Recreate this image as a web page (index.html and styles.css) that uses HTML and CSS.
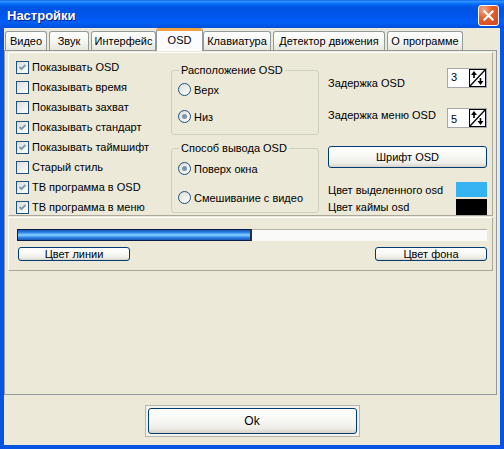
FILE: index.html
```html
<!DOCTYPE html>
<html lang="ru">
<head>
<meta charset="utf-8">
<title>Настройки</title>
<link rel="stylesheet" href="styles.css">
</head>
<body>
<div class="window">
  <div class="titlebar">
    <span class="title">Настройки</span>
    <span class="close"><svg width="13" height="13" viewBox="0 0 13 13"><path d="M2.5 2.5 L10.5 10.5 M10.5 2.5 L2.5 10.5" stroke="#fff" stroke-width="2.2" stroke-linecap="square"/></svg></span>
  </div>
  <div class="client">
    <div class="tabs">
      <div class="tab w-video">Видео</div>
      <div class="tab w-sound">Звук</div>
      <div class="tab w-iface">Интерфейс</div>
      <div class="tab sel w-osd">OSD</div>
      <div class="tab w-keys">Клавиатура</div>
      <div class="tab w-motion">Детектор движения</div>
      <div class="tab w-about">О программе</div>
    </div>
    <div class="pane">
      <div class="panel top">
        <div class="checks">
          <div class="check"><span class="box"><svg viewBox="0 0 11 11" width="11" height="11"><polyline points="2.5,5 4.5,7 8.5,3" fill="none" stroke="#8095AE" stroke-width="1.8"/></svg></span>Показывать OSD</div>
          <div class="check"><span class="box"></span>Показывать время</div>
          <div class="check"><span class="box"></span>Показывать захват</div>
          <div class="check"><span class="box"><svg viewBox="0 0 11 11" width="11" height="11"><polyline points="2.5,5 4.5,7 8.5,3" fill="none" stroke="#8095AE" stroke-width="1.8"/></svg></span>Показывать стандарт</div>
          <div class="check"><span class="box"><svg viewBox="0 0 11 11" width="11" height="11"><polyline points="2.5,5 4.5,7 8.5,3" fill="none" stroke="#8095AE" stroke-width="1.8"/></svg></span>Показывать таймшифт</div>
          <div class="check"><span class="box"></span>Старый стиль</div>
          <div class="check"><span class="box"><svg viewBox="0 0 11 11" width="11" height="11"><polyline points="2.5,5 4.5,7 8.5,3" fill="none" stroke="#8095AE" stroke-width="1.8"/></svg></span>ТВ программа в OSD</div>
          <div class="check"><span class="box"><svg viewBox="0 0 11 11" width="11" height="11"><polyline points="2.5,5 4.5,7 8.5,3" fill="none" stroke="#8095AE" stroke-width="1.8"/></svg></span>ТВ программа в меню</div>
        </div>
        <div class="groups">
          <fieldset class="group">
            <legend>Расположение OSD</legend>
            <div class="radio r-a"><span class="ring"></span>Верх</div>
            <div class="radio r-b"><span class="ring on"></span>Низ</div>
          </fieldset>
          <fieldset class="group">
            <legend>Способ вывода OSD</legend>
            <div class="radio r-c"><span class="ring on"></span>Поверх окна</div>
            <div class="radio r-d"><span class="ring"></span>Смешивание с видео</div>
          </fieldset>
        </div>
        <div class="side">
          <div class="spinrow first">
            <span class="lbl lbl-low">Задержка OSD</span>
            <div class="spin"><span class="val">3</span><svg class="spinbtn" width="17" height="18" viewBox="0 0 17 18"><rect x="0.5" y="0.5" width="16" height="17" fill="#fff" stroke="#000"/><path d="M1 17 L16 1" stroke="#000" stroke-width="1.3"/><path d="M5 2 L2 6 H4.2 V9 H5.8 V6 H8 Z" fill="#000"/><path d="M11.5 16 L8.5 12 H10.7 V9 H12.3 V12 H14.5 Z" fill="#000"/></svg></div>
          </div>
          <div class="spinrow second">
            <span class="lbl">Задержка меню OSD</span>
            <div class="spin"><span class="val val-low">5</span><svg class="spinbtn" width="17" height="18" viewBox="0 0 17 18"><rect x="0.5" y="0.5" width="16" height="17" fill="#fff" stroke="#000"/><path d="M1 17 L16 1" stroke="#000" stroke-width="1.3"/><path d="M5 2 L2 6 H4.2 V9 H5.8 V6 H8 Z" fill="#000"/><path d="M11.5 16 L8.5 12 H10.7 V9 H12.3 V12 H14.5 Z" fill="#000"/></svg></div>
          </div>
          <div class="btn fontbtn">Шрифт OSD</div>
          <div class="colorrow c1"><span>Цвет выделенного osd</span><span class="swatch blue"></span></div>
          <div class="colorrow c2"><span>Цвет каймы osd</span><span class="swatch black"></span></div>
        </div>
      </div>
      <div class="panel bottom">
        <div class="progress"><div class="fill" style="width:50%"></div></div>
        <div class="btnrow">
          <div class="btn small">Цвет линии</div>
          <div class="btn small">Цвет фона</div>
        </div>
      </div>
    </div>
    <div class="footer">
      <div class="okframe"><div class="btn ok">Ok</div></div>
    </div>
  </div>
</div>
</body>
</html>
```
FILE: styles.css
```css
* { box-sizing: border-box; }
html, body { margin: 0; padding: 0; }
body {
  width: 504px; height: 449px; overflow: hidden;
  background: #ECE9D8;
  font-family: "Liberation Sans", Arial, sans-serif;
  font-size: 11px; color: #000;
}

.window {
  width: 504px; height: 449px;
  display: flex; flex-direction: column;
  background: #0753E2;
}

.titlebar {
  flex: none; height: 28px;
  display: flex; align-items: center; justify-content: space-between;
  padding: 3px 5px 0 7px;
  background: linear-gradient(to bottom, #0058EE 0px, #3593FF 1px, #288EFF 2px, #127DFF 3px, #036FFC 4px, #0262EE 5px, #0057E5 7px, #0054E3 9px, #0055EB 16px, #005BF5 19px, #0260F5 22px, #0058E8 25px, #0050D8 28px);
}
.title {
  color: #fff; font-weight: bold; font-size: 13px;
  text-shadow: 1px 1px 0 #0F1F8A;
}
.close {
  width: 21px; height: 21px;
  border: 1px solid #fff; border-radius: 3px;
  background: radial-gradient(circle at 25% 20%, #F5A886 0, #E4602F 40%, #D2451E 100%);
  display: flex; align-items: center; justify-content: center;
}

.client {
  flex: 1;
  margin: 0 4px 4px 4px;
  background: #ECE9D8;
  display: flex; flex-direction: column;
}

/* tabs */
.tabs {
  flex: none; height: 22px;
  display: flex; align-items: flex-end;
  padding-left: 1px;
  position: relative; z-index: 1;
}
.tab {
  height: 19px; margin-right: 2px;
  border: 1px solid #919B9C; border-bottom: none;
  border-radius: 3px 3px 0 0;
  background: linear-gradient(to bottom, #FFFFFF, #F4F4F0 60%, #E6E5DD);
  display: flex; align-items: center; justify-content: center;
  white-space: nowrap;
}
.tab.sel {
  height: 23px; margin-left: -2px; margin-right: 0; margin-bottom: -1px;
  background: #FCFCFE;
  border-top: 3px solid #F2A040;
  padding-bottom: 3px;
}
.w-video { width: 42px; }
.w-sound { width: 40px; }
.w-iface { width: 65px; }
.w-osd { width: 47px; }
.w-keys { width: 68px; }
.w-motion { width: 112px; }
.w-about { width: 76px; }

.pane {
  flex: none; width: 493px; height: 345px;
  border: 1px solid #919B9C;
  background: #ECE9D8;
  padding: 1px 0 0 3px;
  display: flex; flex-direction: column;
}

.panel {
  border: 1px solid;
  border-color: #FFFFFF #ACA899 #ACA899 #FFFFFF;
}
.panel.top {
  width: 485px; height: 164px;
  padding-left: 7px;
  display: grid;
  grid-template-columns: 155px 148px 168px;
  align-items: start;
}

/* checkboxes */
.checks { padding-top: 6px; display: flex; flex-direction: column; gap: 4px; }
.check { height: 16px; display: flex; align-items: center; gap: 3px; white-space: nowrap; }
.box {
  width: 13px; height: 13px; flex: none;
  border: 1px solid #1C5180;
  background: linear-gradient(135deg, #DCDCD7, #FFFFFF);
  display: flex;
}

/* group boxes */
.groups { padding-top: 10px; display: flex; flex-direction: column; gap: 6px; }
.group {
  margin: 0; height: 72px;
  padding: 0 0 0 4px;
  border: 1px solid #D0D0BF; border-radius: 3px;
}
.group legend { padding: 0 2px; margin-left: 3px; line-height: 14px; }
.radio { height: 13px; display: flex; align-items: center; gap: 3px; margin-left: 2px; white-space: nowrap; }
.r-a { margin-top: 6px; }
.r-b { margin-top: 14px; }
.r-c { margin-top: 7px; }
.r-d { margin-top: 16px; }
.ring {
  width: 13px; height: 13px; flex: none;
  border: 1px solid #1C5180; border-radius: 50%;
  background: linear-gradient(135deg, #DCDCD7, #FFFFFF);
  display: flex; align-items: center; justify-content: center;
}
.ring.on::after {
  content: ""; width: 5px; height: 5px; border-radius: 50%;
  background: #8093AA;
}

/* right side */
.side { margin-left: 9px; padding-top: 15px; width: 159px; display: flex; flex-direction: column; }
.spinrow { height: 20px; display: flex; justify-content: space-between; align-items: flex-start; white-space: nowrap; }
.spinrow.second { margin-top: 20px; }
.lbl { line-height: 14px; }
.lbl-low { margin-top: 8px; }
.spin {
  width: 40px; height: 20px;
  border: 1px solid #A7A6AA;
  background: #fff;
  display: flex; justify-content: space-between;
}
.val { padding: 1px 0 0 3px; line-height: 14px; }
.val.val-low { padding-top: 3px; }
.spinbtn { display: block; }

.btn {
  display: flex; align-items: center; justify-content: center;
  border: 1px solid #003C74; border-radius: 3px;
  background: linear-gradient(to bottom, #FFFFFF 0%, #F8F8F5 45%, #EEEDE7 80%, #D8D3C8 100%);
  white-space: nowrap;
}
.fontbtn { margin-top: 18px; height: 22px; }
.colorrow { display: flex; justify-content: space-between; align-items: center; white-space: nowrap; }
.c1 { margin-top: 14px; height: 15px; }
.c2 { margin-top: 2px; height: 16px; }
.swatch { width: 31px; height: 100%; }
.swatch.blue { background: #35B3F2; }
.swatch.black { background: #000; }

/* bottom panel */
.panel.bottom {
  margin-top: 1px;
  width: 485px; height: 54px;
  padding-left: 8px;
}
.progress {
  margin-top: 11px;
  width: 470px; height: 12px;
  background: #FAFAF8;
  box-shadow: inset 0 1px 0 #B4B1A6;
  display: flex;
}
.fill {
  height: 12px;
  border: 1px solid #0B1E4A;
  border-right: 2px solid #2A2F3A;
  background: linear-gradient(to bottom, #1B55B8 0%, #2F86E8 25%, #8AD2FF 50%, #2F86E8 75%, #1B55B8 100%);
}
.btnrow { margin-top: 6px; width: 470px; display: flex; justify-content: space-between; padding-left: 1px; }
.btn.small { width: 112px; height: 14px; }

/* footer */
.footer { flex: 1; display: flex; align-items: center; justify-content: center; padding-top: 2px; }
.okframe {
  width: 215px; height: 32px;
  border: 1px solid #B8B5A9;
  padding: 2px;
  background: #F3F2EC;
}
.btn.ok { width: 100%; height: 100%; font-size: 12px; }
```
